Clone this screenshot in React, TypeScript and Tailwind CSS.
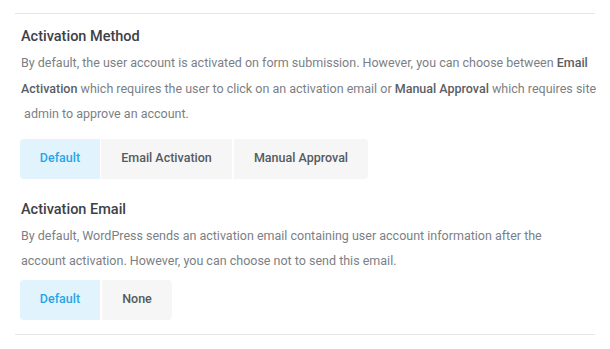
import React, { useState } from "react";

type Option = { key: string; label: string; width: string };

function Segmented({ options, value, onChange }: { options: Option[]; value: string; onChange: (k: string) => void }) {
  return (
    <div className="flex gap-px">
      {options.map((o, i) => {
        const active = o.key === value;
        return (
          <button
            key={o.key}
            onClick={() => onChange(o.key)}
            className={[
              "h-[40px] text-[12.5px] font-medium",
              o.width,
              i === 0 ? "rounded-l" : "",
              i === options.length - 1 ? "rounded-r" : "",
              active ? "bg-[#e1f4fe] text-[#2aa4e6]" : "bg-[#f6f6f6] text-[#555a60]",
            ].join(" ")}
          >
            {o.label}
          </button>
        );
      })}
    </div>
  );
}

export default function App() {
  const [method, setMethod] = useState("default");
  const [email, setEmail] = useState("default");

  return (
    <div className="h-[349px] w-[610px] bg-white font-['Roboto',sans-serif]">
      <div className="mx-[15px] mt-[13px] border-b border-t border-[#e6e6e6] pb-[14px] pl-[6px] pt-[13px]">
        <h2 className="text-[14.5px] font-medium leading-5 text-[#3d4147]">Activation Method</h2>
        <p className="mt-[3px] whitespace-nowrap text-[12.5px] leading-[25.5px] text-[#7b7f85]">
          By default, the user account is activated on form submission. However, you can choose between{" "}
          <b className="font-medium text-[#5a5e64]">Email</b>
          <br />
          <b className="font-medium text-[#5a5e64]">Activation</b> which requires the user to click on an activation email or{" "}
          <b className="font-medium text-[#5a5e64]">Manual Approval</b> which requires site
          <br />
          &nbsp;admin to approve an account.
        </p>
        <div className="-ml-px mt-[12px]">
          <Segmented
            value={method}
            onChange={setMethod}
            options={[
              { key: "default", label: "Default", width: "w-[80px]" },
              { key: "email", label: "Email Activation", width: "w-[131px] mr-px" },
              { key: "manual", label: "Manual Approval", width: "w-[134px]" },
            ]}
          />
        </div>

        <h2 className="mt-[21px] text-[14.5px] font-medium leading-5 text-[#3d4147]">Activation Email</h2>
        <p className="mt-[3px] whitespace-nowrap text-[12.5px] leading-[25px] text-[#7b7f85]">
          By default, WordPress sends an activation email containing user account information after the
          <br />
          account activation. However, you can choose not to send this email.
        </p>
        <div className="-ml-px mt-[7px]">
          <Segmented
            value={email}
            onChange={setEmail}
            options={[
              { key: "default", label: "Default", width: "w-[80px] mr-px" },
              { key: "none", label: "None", width: "w-[70px]" },
            ]}
          />
        </div>
      </div>
    </div>
  );
}
